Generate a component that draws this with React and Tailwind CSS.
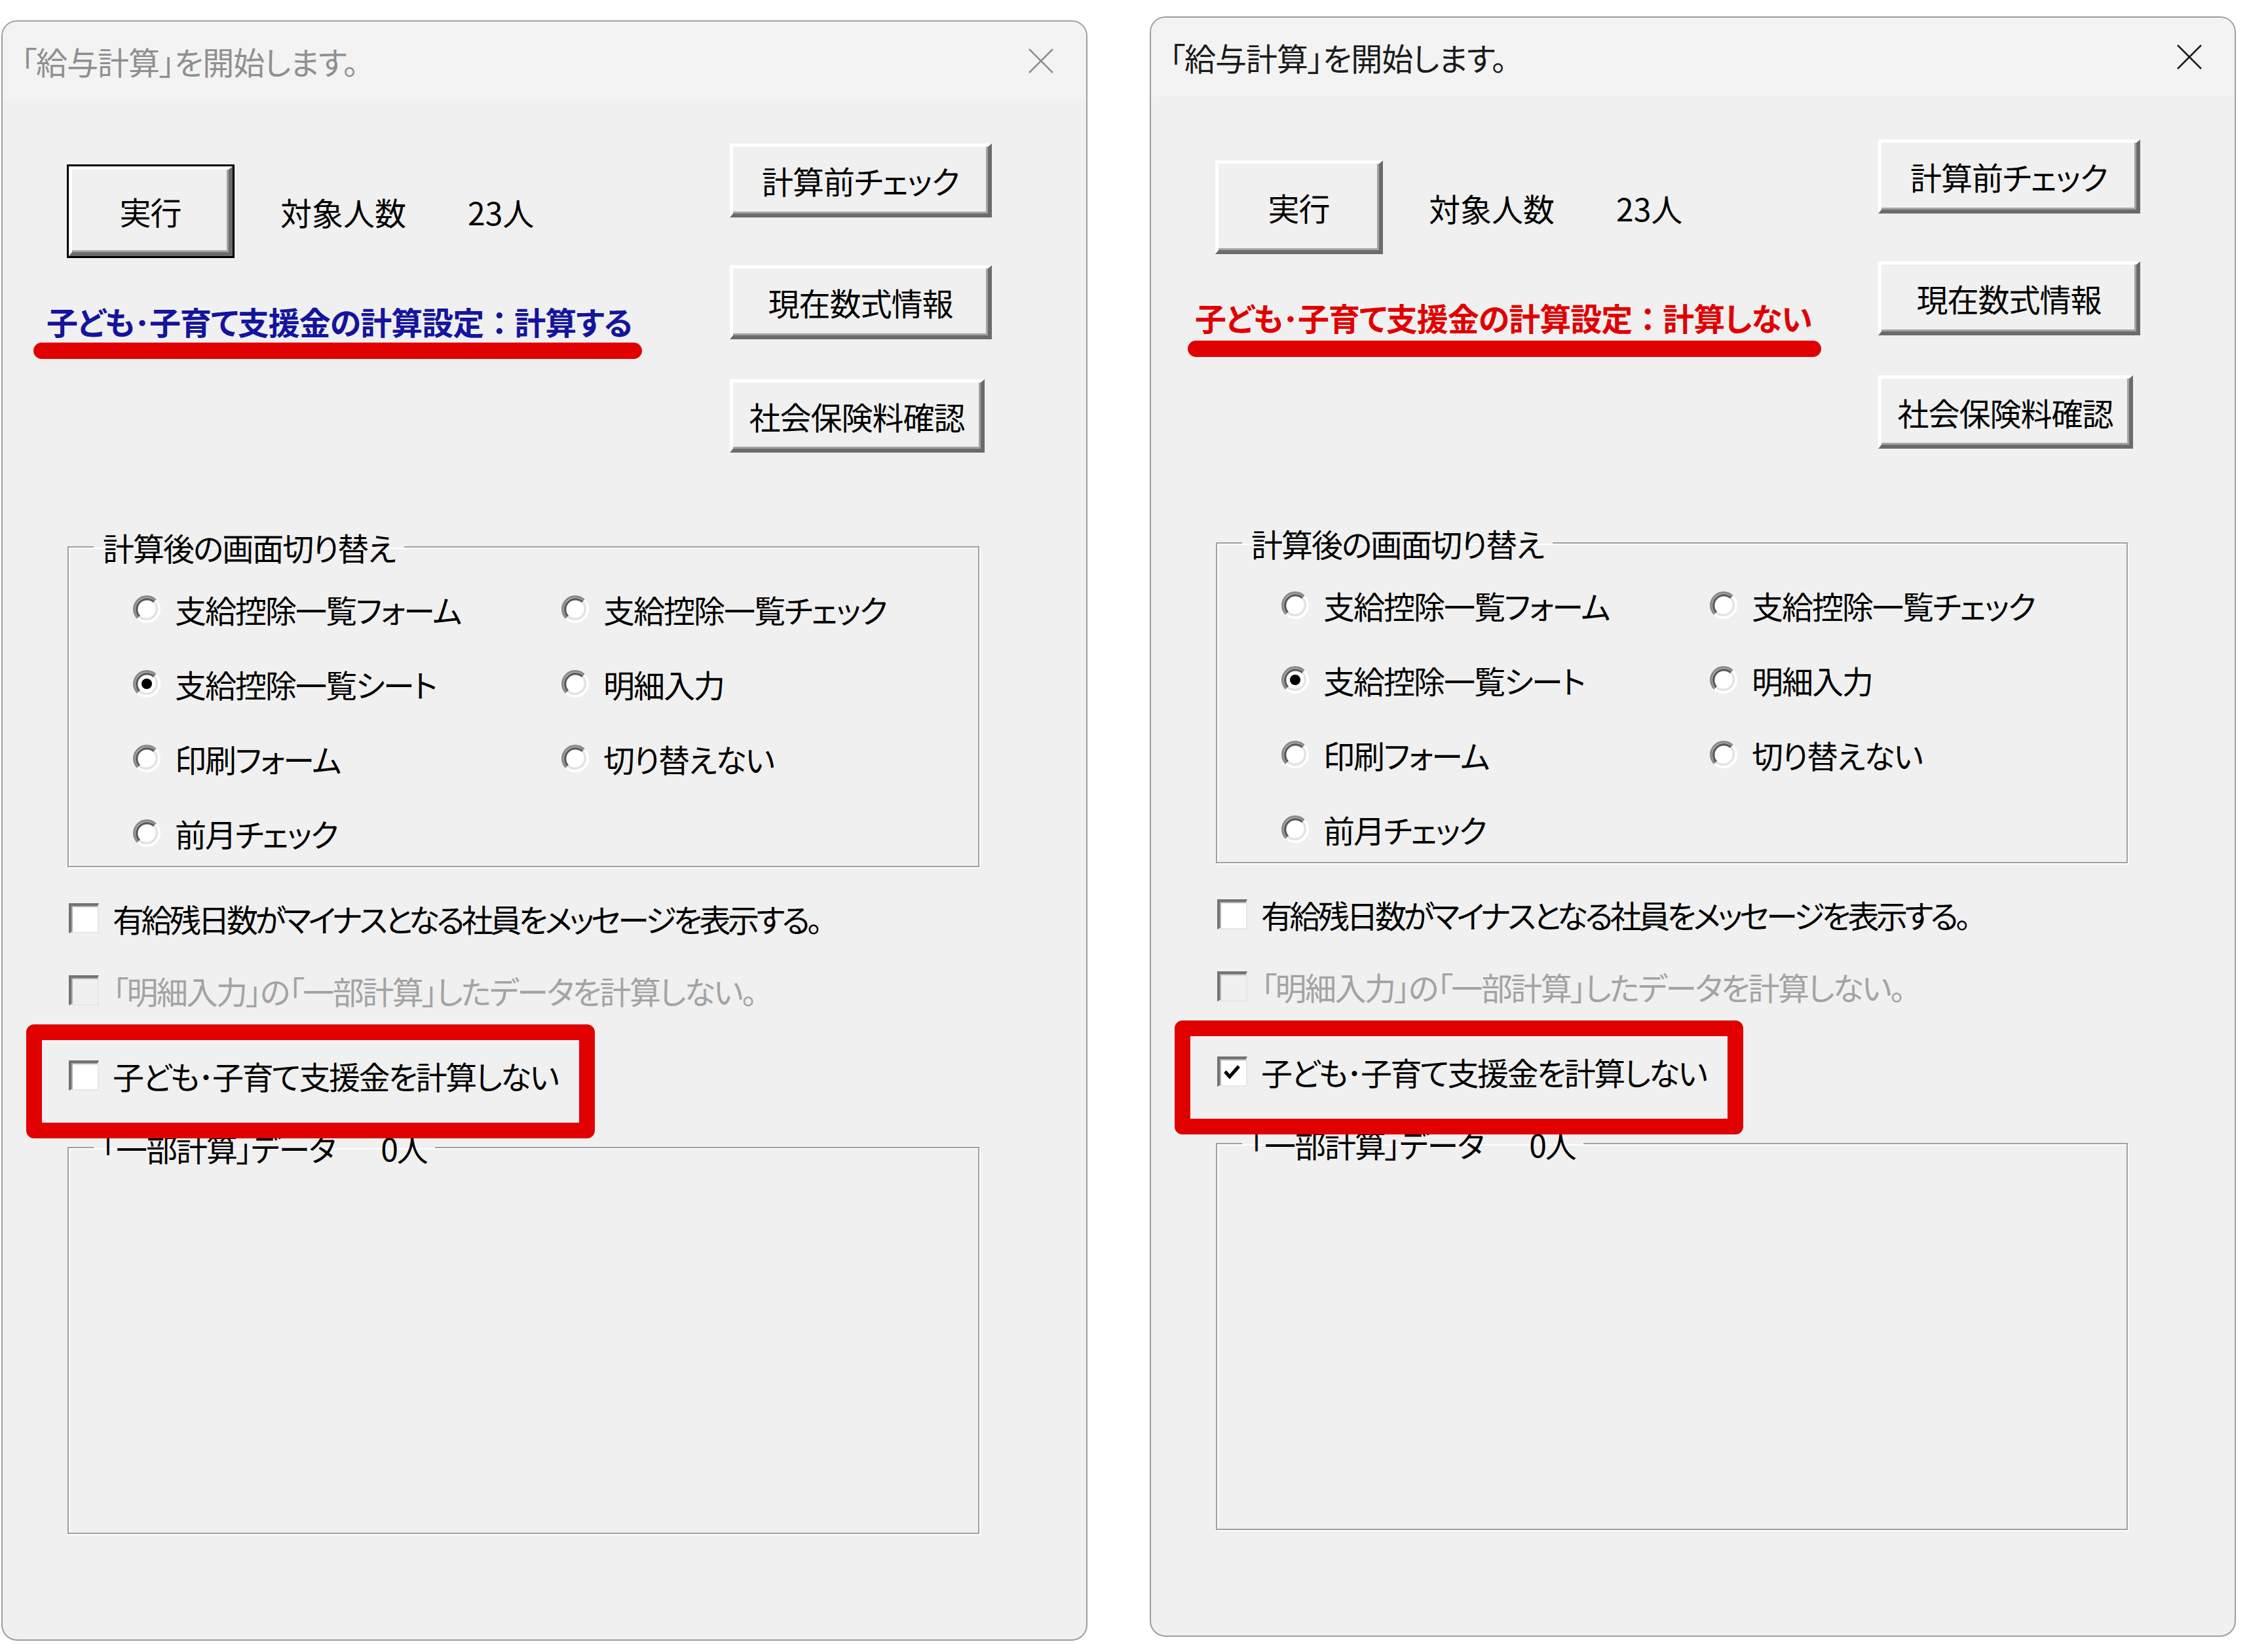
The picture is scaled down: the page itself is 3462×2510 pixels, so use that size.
import React from "react";

const FONT = "font-['Noto_Sans_CJK_JP','Noto_Sans',sans-serif] [font-feature-settings:'palt']";

function CloseIcon({ active }) {
  const c = active ? "#1b1b1b" : "#8f8f8f";
  return (
    <svg width="38" height="38" viewBox="0 0 38 38">
      <line x1="1" y1="1" x2="37" y2="37" stroke={c} strokeWidth="2.5" />
      <line x1="37" y1="1" x2="1" y2="37" stroke={c} strokeWidth="2.5" />
    </svg>
  );
}

// Classic 3D push button face
const FACE =
  "flex items-center justify-center bg-[#f0f0f0] border-t-[5px] border-l-[5px] border-b-[6px] border-r-[6px] border-t-white border-l-white border-b-[#6b6b6b] border-r-[#6b6b6b] shadow-[inset_-3px_-3px_0_#a3a3a3] text-[48px] leading-none tracking-[-1px] text-black";

function PushButton({ className, children }) {
  return <div className={`${FACE} ${className}`}>{children}</div>;
}

function RunButton({ isDefault }) {
  if (isDefault) {
    return (
      <div className="w-[256px] h-[143px] border-[3px] border-black shrink-0">
        <div className={`${FACE} w-full h-full`}>実行</div>
      </div>
    );
  }
  return <div className={`${FACE} w-[256px] h-[143px] shrink-0`}>実行</div>;
}

function Radio({ checked }) {
  return (
    <svg width="42" height="42" viewBox="0 0 12 12" className="shrink-0">
      <circle cx="6" cy="6" r="5.5" fill="#ffffff" />
      <path d="M2.11 9.89 A5.5 5.5 0 0 1 9.89 2.11" fill="none" stroke="#8a8a8a" strokeWidth="1" />
      <path d="M2.82 9.18 A4.5 4.5 0 0 1 9.18 2.82" fill="none" stroke="#5a5a5a" strokeWidth="1" />
      <path d="M9.89 2.11 A5.5 5.5 0 0 1 2.11 9.89" fill="none" stroke="#ffffff" strokeWidth="1" />
      <path d="M9.18 2.82 A4.5 4.5 0 0 1 2.82 9.18" fill="none" stroke="#e3e3e3" strokeWidth="1" />
      {checked && <circle cx="6" cy="6" r="2.3" fill="#000000" />}
    </svg>
  );
}

function CheckBox({ checked, disabled }) {
  return (
    <div
      className={`relative w-[46px] h-[46px] shrink-0 border-t-[4px] border-l-[4px] border-b-[2px] border-r-[2px] border-t-[#727272] border-l-[#727272] border-b-[#e6e6e6] border-r-[#e6e6e6] shadow-[inset_2px_2px_0_#b0b0b0] ${
        disabled ? "bg-[#f0f0f0]" : "bg-white"
      }`}
    >
      {checked && (
        <svg width="40" height="40" viewBox="0 0 40 40" className="block">
          <polyline points="8,19 15,27 29,11" fill="none" stroke="#000" strokeWidth="5" strokeLinejoin="miter" />
        </svg>
      )}
    </div>
  );
}

function RadioItem({ checked, label }) {
  return (
    <div className="flex items-center">
      <Radio checked={checked} />
      <span className="ml-[22px] text-[48px] leading-none tracking-[-2px] text-black whitespace-nowrap">{label}</span>
    </div>
  );
}

function CheckRow({ checked, disabled, label, className, tight }) {
  return (
    <div className={`ml-[3px] h-[60px] flex items-center ${className}`}>
      <CheckBox checked={checked} disabled={disabled} />
      <span
        className={`ml-[21px] text-[48px] leading-none whitespace-nowrap ${tight ? "tracking-[-4.5px]" : "tracking-[-2.5px]"} ${
          disabled ? "text-[#a3a3a3]" : "text-black"
        }`}
      >
        {label}
      </span>
    </div>
  );
}

const GROUP =
  "ml-px w-[1392px] border-2 border-[#a0a0a0] shadow-[inset_2px_2px_0_#ffffff,2px_2px_0_#ffffff]";

function Dialog({ active, calc }) {
  return (
    <div className={`${FONT} w-[1658px] h-[2474px] flex flex-col rounded-[24px] border-2 border-[#9e9e9e] bg-[#f0f0f0] overflow-hidden`}>
      {/* title bar */}
      <div className="h-[120px] shrink-0 bg-[#f3f3f3] flex items-center justify-between pl-[28px] pr-[50px]">
        <span className={`text-[48px] leading-none tracking-[-1px] ${active ? "text-[#1b1b1b]" : "text-[#8f8f8f]"}`}>
          「給与計算」を開始します。
        </span>
        <CloseIcon active={active} />
      </div>

      {/* body */}
      <div className="flex-1 flex flex-col pl-[98px]">
        <div className="w-[1412px] flex justify-between items-start">
          <div className="flex flex-col pt-[98px]">
            <div className="flex items-center">
              <RunButton isDefault={!active} />
              <span className="ml-[70px] text-[48px] leading-none text-black">対象人数</span>
              <span className="ml-[94px] text-[48px] leading-none text-black">23人</span>
            </div>
            {calc ? (
              <div className="-ml-[31px] mt-[66px] text-[48px] font-bold leading-[60px] tracking-[-1px] text-[#14149c] whitespace-nowrap">
                子ども･子育て支援金の計算設定<span className="[font-feature-settings:normal]">：</span>計算する
              </div>
            ) : (
              <div className="-ml-[31px] mt-[66px] text-[48px] font-bold leading-[60px] tracking-[-1px] text-[#e00000] whitespace-nowrap">
                子ども･子育て支援金の計算設定<span className="[font-feature-settings:normal]">：</span>計算しない
              </div>
            )}
            {calc ? (
              <div className="-ml-[51px] mt-[3px] h-[25px] w-[929px] rounded-full bg-[#e00000]" />
            ) : (
              <div className="-ml-[42px] mt-[6px] h-[25px] w-[967px] rounded-full bg-[#e00000]" />
            )}
          </div>
          <div className="flex flex-col items-start pt-[66px]">
            <PushButton className="w-[400px] h-[113px]">計算前チェック</PushButton>
            <PushButton className="mt-[73px] w-[400px] h-[113px]">現在数式情報</PushButton>
            <PushButton className="mt-[61px] w-[389px] h-[112px]">社会保険料確認</PushButton>
          </div>
        </div>

        <fieldset className={`${GROUP} mt-[116px] h-[517px]`}>
          <legend className="ml-[38px] px-[14px] text-[48px] leading-[56px] tracking-[-2px] text-black">計算後の画面切り替え</legend>
          <div className="grid grid-cols-[654px_1fr] auto-rows-[114px] items-center pl-[98px] pt-[10px]">
            <RadioItem label="支給控除一覧フォーム" />
            <RadioItem label="支給控除一覧チェック" />
            <RadioItem checked label="支給控除一覧シート" />
            <RadioItem label="明細入力" />
            <RadioItem label="印刷フォーム" />
            <RadioItem label="切り替えない" />
            <RadioItem label="前月チェック" />
          </div>
        </fieldset>

        <CheckRow className="mt-[48px]" tight label="有給残日数がマイナスとなる社員をメッセージを表示する。" />
        <CheckRow className="mt-[50px]" disabled label="「明細入力」の「一部計算」したデータを計算しない。" />
        <div className="relative mt-[70px]">
          <CheckRow checked={!calc} label="子ども･子育て支援金を計算しない" />
          <div className="absolute z-10 -left-[62px] -top-[48px] w-[868px] h-[174px] border-[24px] border-[#e00000] rounded-[12px]" />
        </div>

        <fieldset className={`${GROUP} mt-[52px] h-[618px]`}>
          <legend className="ml-[38px] px-[12px] text-[48px] leading-[56px] tracking-[-2px] text-black">
            「一部計算」データ<span className="ml-[70px]">0人</span>
          </legend>
        </fieldset>
      </div>
    </div>
  );
}

export default function App() {
  return (
    <div className="w-[3462px] h-[2510px] bg-white flex items-start pl-[2px] gap-[95px] overflow-hidden">
      <div className="mt-[31px]">
        <Dialog active={false} calc={true} />
      </div>
      <div className="mt-[25px]">
        <Dialog active={true} calc={false} />
      </div>
    </div>
  );
}
